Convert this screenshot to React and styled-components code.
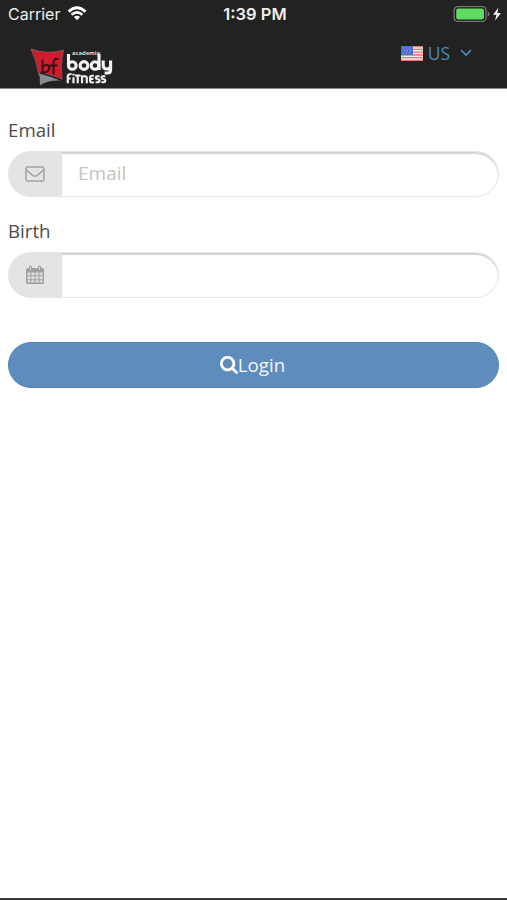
import React from 'react';
import styled, { createGlobalStyle } from 'styled-components';

function WifiIcon() {
  return (
    <svg width='20' height='15' viewBox='0 0 20 15' fill='none' stroke='#fff'>
      <path d='M1.6 5.6Q10-2 18.4 5.6' strokeWidth='2.8' />
      <path d='M4.6 8.8Q10 4 15.4 8.8' strokeWidth='2.6' />
      <path d='M6.9 11.1Q10 8.2 13.1 11.1L10 14.3z' fill='#fff' stroke='none' />
    </svg>
  );
}

function BatteryIcon() {
  return (
    <svg width='49' height='18' viewBox='0 0 49 18'>
      <rect x='1.2' y='1.7' width='31.8' height='14.6' rx='3.6' fill='#1b1b1b' stroke='#77757a' strokeWidth='1.3' />
      <rect x='3.2' y='3.6' width='27.8' height='10.8' rx='1.8' fill='#5edb60' />
      <path d='M34.7 6.6q1.9.7 1.9 2.4t-1.9 2.4z' fill='#77757a' />
      <path d='M45.4 2.8L40 9.7h3.5L42 15.6l6-7.6h-3.7z' fill='#fff' />
    </svg>
  );
}

function Logo() {
  return (
    <svg width='86' height='42' viewBox='0 0 86 42'>
      <path d='M1 3Q18 9 33.500 4Q30 20 32 34Q22 27 9 29.500Q6.500 15 1 3z' fill='#cf1c2e' stroke='#777' strokeWidth='.6' />
      <path d='M9.500 27Q20 27 31.500 34.500Q17 34 10 39.500z' fill='#8b8b8b' />
      <path d='M10 27Q22 30 32 34.500' fill='none' stroke='#222' strokeWidth='1.400' />
      <g fill='none' stroke='#3b1015' strokeWidth='2'>
        <path d='M12.500 13.500V27M12.500 21q4-4 6.500-.5 1.500 5.500-6 6' />
        <path d='M28.500 13q-5-1.500-5 4.500v11M19.500 19.500h8' />
      </g>
      <text x='42' y='8.500' fontSize='5.500' fontWeight='700' textLength='28' lengthAdjust='spacingAndGlyphs' fill='#dcdcdc'>academia</text>
      <g fill='none' stroke='#f4f4f4' strokeWidth='3.100'>
        <path d='M38.500 8v12' />
        <circle cx='42.300' cy='19.500' r='3.800' />
        <circle cx='54' cy='19.500' r='3.900' />
        <circle cx='65' cy='19.500' r='3.800' />
        <path d='M69 8v16' />
        <path d='M73.200 14.500v5q0 3.500 3.700 3.500t3.700-3.500v-5M80.600 18.500v5.500q0 3-3 3h-3' />
      </g>
      <g transform='translate(1.200 3) scale(.95 .88)' fill='none' stroke='#f0f0f0' strokeWidth='2.300'>
        <path d='M38.500 39v-8q0-2.500 4-2.500M37.500 33.500h4M44.500 32v7M44.500 28v2' />
        <path d='M46 30h6M49 30v9M53.500 39v-8h3q2 0 2 2v6' />
        <path d='M66 30.500h-2q-2 0-2 2v3.500q0 2 2 2h2M62 34h3.500' />
        <path d='M72 31h-2.500q-1.500 0-1.500 1.500t1.500 1.700l1 .3q1.500.3 1.500 1.700t-1.500 1.700h-2.700M78 31h-2.500q-1.500 0-1.500 1.500t1.500 1.700l1 .3q1.500.3 1.500 1.700t-1.500 1.700h-2.700' />
      </g>
    </svg>
  );
}

function Flag() {
  return (
    <svg width='22' height='15' viewBox='0 0 22 15'>
      <rect width='22' height='15' fill='#f5e8e9' />
      <path d='M0 .6h22M0 3.400h22M0 6.200h22M0 9h22M0 11.700h22M0 14.400h22' stroke='#e5767a' strokeWidth='1.300' />
      <rect width='12' height='9' fill='#4a71d0' />
      <path d='M2 2h9M3 4.500h8M2 7h9' stroke='#8aa7e6' strokeDasharray='1 2' />
    </svg>
  );
}

function EnvelopeIcon() {
  return (
    <svg width='20' height='16' viewBox='0 0 20 16' fill='none' stroke='#a2a2a2' strokeWidth='1.500'>
      <rect x='1' y='1' width='18' height='14' rx='1.600' />
      <path d='M1.200 3.500Q2.500 5.200 7.800 9.300q2.200 1.600 4.400 0Q17.500 5.200 18.800 3.500' />
    </svg>
  );
}

function CalendarIcon() {
  return (
    <svg width='20' height='20' viewBox='0 0 20 20'>
      <path d='M2.500 3H4V2q0-1.600 1.500-1.600T7 2v1h6V2q0-1.600 1.500-1.600T16 2v1h1.500q1.500 0 1.500 1.500v13q0 1.500-1.500 1.500h-15Q1 19 1 17.500v-13Q1 3 2.500 3z' fill='#a0a0a0' />
      <path d='M5.500 2v3M14.500 2v3' stroke='#dadada' strokeWidth='1' />
      <path d='M2.400 7.400h3v2.900h-3zM6.400 7.400h3.100v2.900H6.400zM10.500 7.400h3.100v2.900h-3.100zM14.600 7.400h3v2.900h-3zM2.400 11.300h3v2.900h-3zM6.400 11.300h3.100v2.900H6.400zM10.500 11.300h3.100v2.900h-3.100zM14.600 11.300h3v2.900h-3zM2.400 15.200h3v2.400h-3zM6.400 15.200h3.100v2.400H6.400zM10.500 15.200h3.100v2.400h-3.100zM14.600 15.200h3v2.400h-3z' fill='#dedede' />
    </svg>
  );
}

function SearchIcon() {
  return (
    <svg width='18' height='18' viewBox='64 128 1664 1664' fill='#fff'>
      <path d='M1216 832q0-185-131.500-316.500t-316.500-131.500-316.500 131.500-131.500 316.500 131.500 316.500 316.500 131.500 316.500-131.500 131.500-316.500zm512 832q0 52-38 90t-90 38q-54 0-90-38l-343-342q-179 124-399 124-143 0-273.500-55.500t-225-150-150-225-55.500-273.500 55.500-273.500 150-225 225-150 273.500-55.500 273.500 55.500 225 150 150 225 55.500 273.500q0 220-124 399l343 343q37 37 37 90z' />
    </svg>
  );
}

function Field({ id, label, icon, placeholder }) {
  return (
    <FieldGroup>
      <Label htmlFor={id}>{label}</Label>
      <InputGroup>
        <Addon>{icon}</Addon>
        <Input id={id} placeholder={placeholder} />
      </InputGroup>
    </FieldGroup>
  );
}

function App() {
  return (
    <Screen>
      <GlobalStyle />
      <Header>
        <StatusBar>
          <Carrier>
            Carrier
            <WifiIcon />
          </Carrier>
          <Time>1:39 PM</Time>
          <Battery>
            <BatteryIcon />
          </Battery>
        </StatusBar>
        <NavBar>
          <Brand>
            <Logo />
          </Brand>
          <Language>
            <Flag />
            <span>US</span>
            <svg width='12' height='8' viewBox='0 0 12 8' fill='none' stroke='#4b87b9' strokeWidth='1.700'>
              <path d='M1 1.200l5 4.800 5-4.800' />
            </svg>
          </Language>
        </NavBar>
      </Header>
      <Form>
        <Field id='email' label='Email' icon={<EnvelopeIcon />} placeholder='Email' />
        <Field id='birth' label='Birth' icon={<CalendarIcon />} />
        <LoginButton type='button'>
          <SearchIcon />
          Login
        </LoginButton>
      </Form>
    </Screen>
  );
}

const GlobalStyle = createGlobalStyle`
  * {
    box-sizing: border-box;
  }

  body {
    margin: 0;
    background-color: #fff;
    font-family: 'Open Sans', sans-serif;
  }

  svg {
    display: block;
    flex-shrink: 0;
  }
`;

const Screen = styled.div`
  display: flex;
  flex-direction: column;
  height: 900px;
  border-bottom: 2px solid #393939;
`;

const Header = styled.header`
  height: 89px;
  background-color: #222;
  border-bottom: 1px solid #888;
`;

const StatusBar = styled.div`
  display: grid;
  grid-template-columns: 1fr auto 1fr;
  align-items: center;
  height: 27px;
  padding: 0 5px 0 8px;
  color: #eee;
  font-family: Inter, sans-serif;
`;

const Carrier = styled.div`
  display: flex;
  align-items: center;
  gap: 7px;
  font-size: 16px;
`;

const Time = styled.div`
  font-size: 16.5px;
  font-weight: 600;
`;

const Battery = styled.div`
  display: flex;
  justify-content: flex-end;
`;

const NavBar = styled.nav`
  display: flex;
  justify-content: space-between;
  align-items: flex-start;
  padding: 17px 35px 0 30px;
`;

const Brand = styled.div`
  padding-top: 2px;
`;

const Language = styled.div`
  display: flex;
  align-items: center;
  height: 18px;
  color: #4b87b9;
  font-size: 17.5px;

  span {
    margin: 0 10px 0 5px;
  }
`;

const Form = styled.form`
  display: flex;
  flex-direction: column;
  padding: 29px 8px 0;
`;

const FieldGroup = styled.div`
  margin-bottom: 22px;
`;

const Label = styled.label`
  display: block;
  height: 33px;
  color: #4b4b4b;
  font-size: 18.7px;
  line-height: 23px;
`;

const InputGroup = styled.div`
  display: flex;
  height: 46px;
`;

const Addon = styled.div`
  display: flex;
  justify-content: center;
  align-items: center;
  width: 54px;
  padding-bottom: 1px;
  background-color: #e4e4e4;
  border-radius: 23px 0 0 23px;
`;

const Input = styled.input`
  flex: 1;
  min-width: 0;
  padding: 0 16px 2px;
  border: 1px solid #e6e6e6;
  border-left: 0;
  border-radius: 0 23px 23px 0;
  box-shadow: inset 0 2px 1px #d2d2d2;
  outline: none;
  color: #555;
  font-family: inherit;
  font-size: 19px;

  &::placeholder {
    color: #c4c4c4;
  }
`;

const LoginButton = styled.button`
  display: flex;
  justify-content: center;
  align-items: center;
  height: 46px;
  margin-top: 22px;
  padding: 0 2px 1px 0;
  border: 1px solid #5084b7;
  border-radius: 23px;
  background-color: #5e8dbd;
  color: #f1f6fb;
  font-family: inherit;
  font-size: 18.7px;
`;

export default App;
